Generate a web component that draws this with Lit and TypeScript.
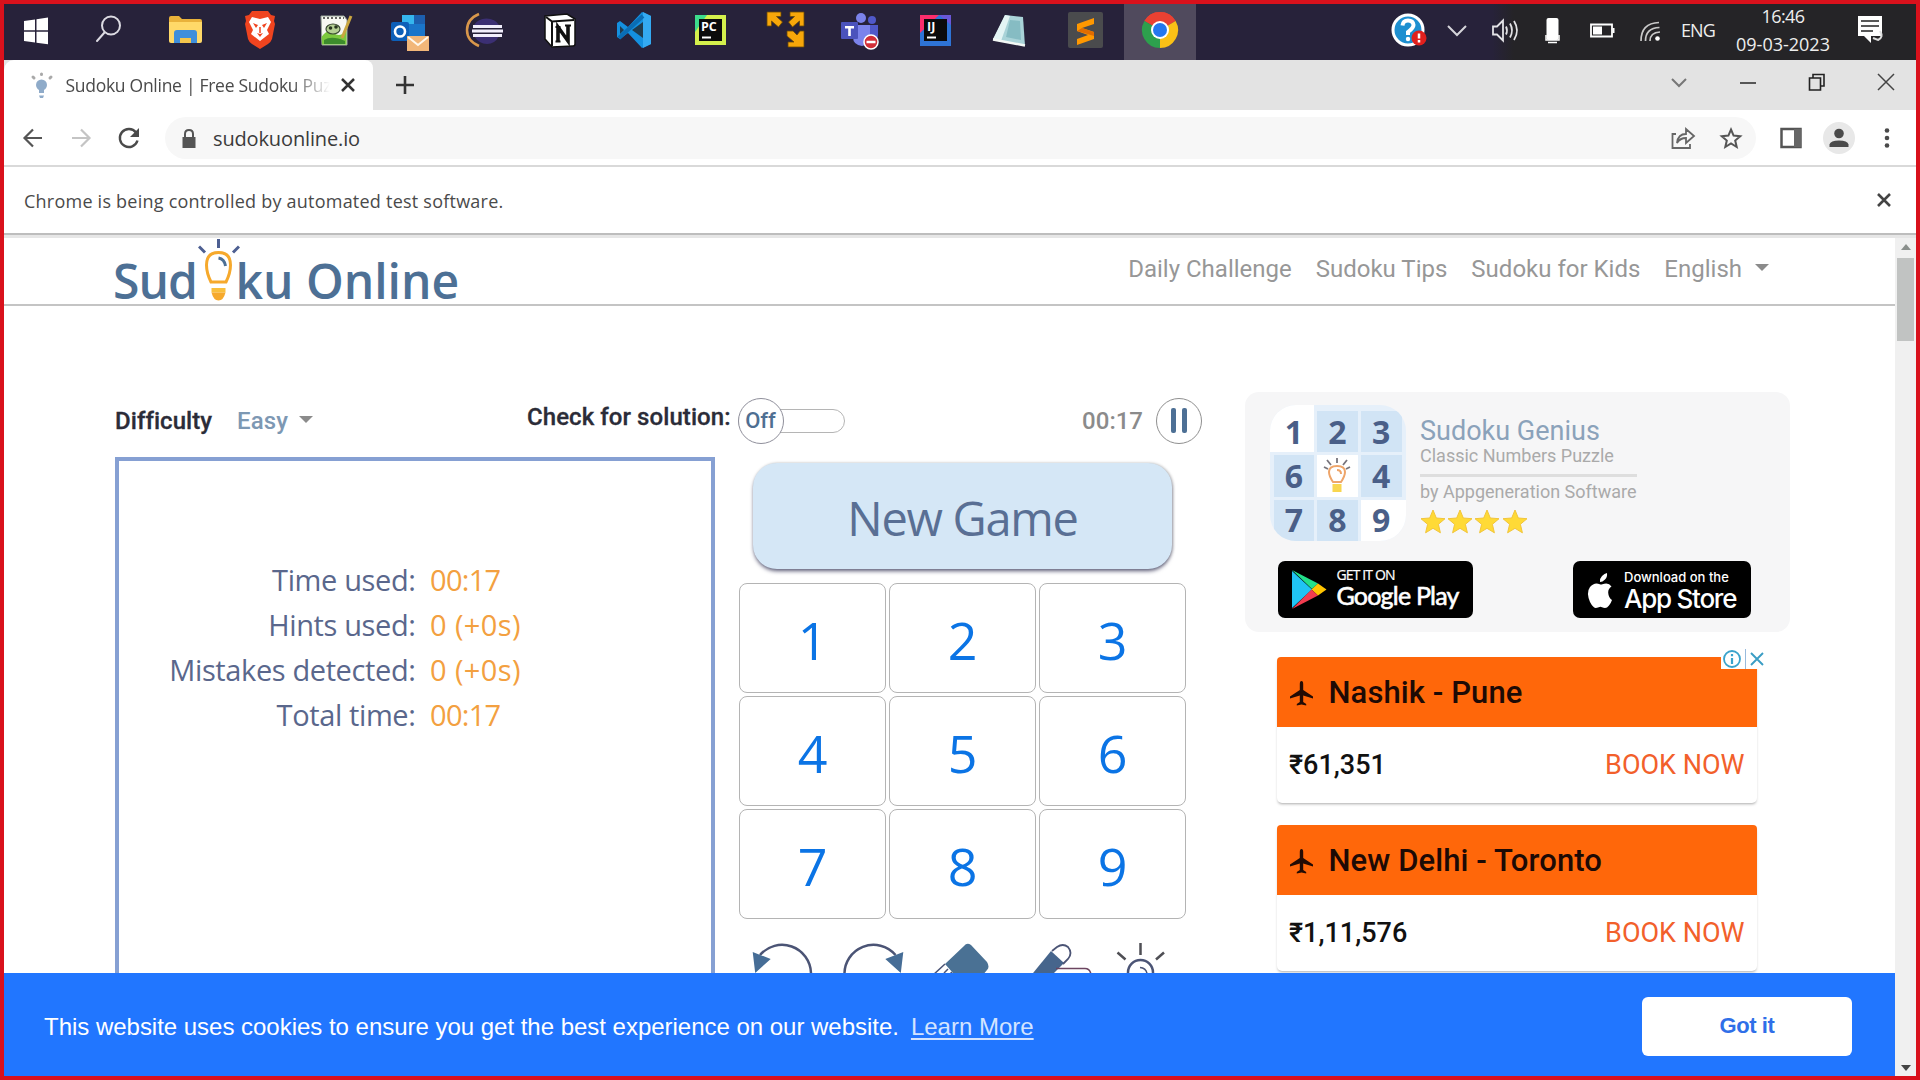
import { LitElement, html, css, svg } from "lit";
import { customElement } from "lit/decorators.js";

const icon = (body: unknown, w = 40, h = 44) =>
  html`<svg width=${w} height=${h} viewBox="0 0 ${w} ${h}" fill="none">${body}</svg>`;

const windowsLogo = svg`<path fill="#fff" d="M8 13l11-1.600v10.800H8zM20.500 11.200L32 9.500v12.700H20.500zM8 23.700h11v10.900L8 33zM20.500 23.700H32v12.600l-11.500-1.600z"/>`;
const searchGlyph = svg`<g stroke="#dcdbe2" stroke-width="2" stroke-linecap="round"><circle cx="23" cy="17.500" r="9"/><path d="M16.500 24.500L9 33"/></g>`;

const apps = [
  svg`<path fill="#e9b23a" d="M4 10q0-2 2-2h8l3 3h18q2 0 2 2v10H4z"/><path fill="#ffd968" d="M4 14h33v19q0 2-2 2H6q-2 0-2-2z"/><path fill="#3f8fdb" d="M9 25q0-3 3-3h17q3 0 3 3v10h-6v-5H15v5H9z"/><path fill="#f4c64c" d="M15 30h11v5H15z"/>`,
  svg`<path fill="#f0441f" d="M12 3h16l3 4 4 1-1 5 1 3-3 15q-1 3-4 5l-8 5-8-5q-3-2-4-5L5 16l1-3-1-5 4-1z"/><path fill="#fff" d="M12 9l8 2 8-2 3 5-4 8 2 4-9 7-9-7 2-4-4-8z"/><path fill="#f0441f" d="M13 15l5 2-2 3zM27 15l-5 2 2 3zM17 25l3 1 3-1-3 4z"/><path stroke="#f0441f" stroke-width="1.500" d="M20 19v6"/>`,
  svg`<path fill="#f7f8f2" stroke="#9aa59a" d="M6 8h23l3 4v25H7z"/><path fill="#7cc93e" d="M6.500 29q6-9 12-4t13-2v13.500H7z"/><path fill="#3d8c2c" d="M9 32q8-5 21 1v3H9z"/><ellipse cx="18" cy="21" rx="7" ry="5" fill="#b5cf94" stroke="#3a4a32" stroke-width="1.200"/><circle cx="15.500" cy="20" r="1.800" fill="#26331f"/><circle cx="21" cy="19" r="1.800" fill="#26331f"/><path stroke="#333" stroke-width="1.500" stroke-dasharray="2 2" d="M8 10h21"/><path stroke="#c9a640" stroke-width="3" d="M36 8l-9 22"/>`,
  svg`<path fill="#1a75c9" d="M12 7h23v24H12z"/><path fill="#35b6ee" d="M12 7h12v9H12z"/><path fill="#1d5fae" d="M24 7h11v9H24z"/><rect x="1" y="14" width="18" height="19" rx="2" fill="#0d5fb8"/><circle cx="10" cy="23.500" r="5" stroke="#fff" stroke-width="2.600"/><rect x="17" y="28" width="22" height="15" fill="#f2b779"/><path stroke="#fff8ec" stroke-width="2" d="M18 29l10 8 10-8"/>`,
  svg`<path stroke="#d9974b" stroke-width="2.500" d="M14 6Q2 11 2 22t12 16"/><path fill="#3b2f73" d="M9 17a14 12 0 0 1 25 0zM9 28h25q-4 8-12 8T9 28z"/><path stroke="#f1eefc" stroke-width="2.800" d="M8 18.500h29M7 23h31M8 27.500h29"/>`,
  svg`<path fill="#fff" stroke="#111" stroke-width="1.500" d="M5 8l22-2 8 5v25q0 2-2 2l-21 1-7-8z"/><path stroke="#111" stroke-width="2" d="M6 9l6 4.500 22-1.500M12 14v24"/><path stroke="#111" stroke-width="3.600" d="M18 34V19l10 14V17"/><path stroke="#111" stroke-width="2" d="M15.500 19h5M25 17.500h6M15.500 33.500h5"/>`,
  svg`<path fill="#1490df" d="M27 4l9 4v28l-9 4L13 25l-8 6-3-2V15l3-2 8 6z"/><path fill="#24201f" fill-opacity=".75" d="M28 14v16L17 22zM5 18v8l4-4z"/><path fill="#34aaf2" d="M28 4l8 4v28l-8 4z"/><path stroke="#0a6db4" stroke-width="4" d="M4 30L28 8"/>`,
  svg`<rect x="5" y="7" width="31" height="30" fill="#d4f04c"/><path fill="#3ddc8c" d="M5 7h12L5 24z"/><rect x="9" y="11" width="23" height="22" fill="#0b0b0b"/><path fill="#fff" d="M12 28.500h9v2h-9z"/><text x="11" y="22.500" class="badge">PC</text>`,
  svg`<path fill="#f7a70a" stroke="#6b4a05" stroke-width=".8" d="M2 4h14v4.500h-4.500l6 5.500-4 5-7-6v5H2zM39 4H25v4.500h4.500l-6 5.500 4 5 7-6v5H39zM22 23h6l4 4 3-4h4v16H23v-5h6l-7-6z"/>`,
  svg`<circle cx="21" cy="10" r="5" fill="#7b83eb"/><circle cx="32" cy="12" r="4" fill="#5059c9"/><path fill="#5059c9" d="M25 17h13v10q0 6-6 7h-7z"/><path fill="#7b83eb" d="M13 17h17v12q0 8-8 9-9-1-9-9z"/><rect x="1" y="14" width="17" height="17" rx="1" fill="#4b53bc"/><path fill="#fff" d="M5 18h9v2.500h-3.200V28H8.200v-7.500H5z"/><circle cx="31" cy="34" r="7" fill="#d12f38" stroke="#fff" stroke-width="1.500"/><path stroke="#fff" stroke-width="2.500" d="M26.500 34h9"/>`,
  svg`<rect x="5" y="7" width="31" height="31" fill="#2e74d6"/><path fill="#fb2d6c" d="M5 7h19L5 25z"/><path fill="#6a57d8" d="M24 7h12v10z"/><rect x="9" y="11" width="23" height="22" fill="#0b0b0b"/><path fill="#fff" d="M12 28.500h9v2h-9z"/><text x="12" y="22.500" class="badge">IJ</text>`,
  svg`<path fill="#a9d3d8" d="M15 7l18 2 2 29-32-6z"/><path fill="#e3f4f4" d="M15 7l5 1-9 25-8-2z"/><path fill="#86bcc3" d="M20 12l10 1 1 19-15-3z"/><path stroke="#f3f8f5" stroke-width="2.500" d="M3 31.500l32 6"/>`,
  svg`<rect x="3" y="4" width="35" height="36" rx="2" fill="#4a4b4d"/><path fill="#ff9800" d="M29 10v6l-12 4 12 4v7l-17 6v-6l11-4-11-4v-7z"/><path fill="#e06c00" d="M17 20l12 4v4l-17-5z"/>`,
  svg`<path fill="#e94132" d="M20 22L4.400 13A18 18 0 0 1 35.600 13z"/><path fill="#fbc116" d="M20 22l15.600-9A18 18 0 0 1 20 40z"/><path fill="#2da04d" d="M20 22v18A18 18 0 0 1 4.400 13z"/><path fill="#e94132" d="M4.400 13A18 18 0 0 1 35.600 13H20z"/><circle cx="20" cy="22" r="9" fill="#fff"/><circle cx="20" cy="22" r="7" fill="#2477ee"/>`,
];

const tray = [
  svg`<circle cx="20" cy="22" r="15" fill="#1d8fd0" stroke="#fff" stroke-width="3"/><path stroke="#fff" stroke-width="4" d="M14.500 17.500q.5-5 5.500-5t5.500 4.500q0 3-5.500 7v3"/><circle cx="20" cy="31" r="2.200" fill="#fff"/><circle cx="31" cy="30" r="7.500" fill="#e0201d"/><path stroke="#fff" stroke-width="2.500" d="M31 25.500v5M31 32v2.500"/>`,
  svg`<path stroke="#d5d5da" stroke-width="2" d="M11 18l9 9 9-9"/>`,
  svg`<path stroke="#e3e3e6" stroke-width="1.800" d="M8 18.500h4l6-6v20l-6-6H8zM21 18.500q2 4 0 8M25 15.500q4 7 0 14M29 13q6 9.500 0 19"/>`,
  svg`<rect x="13.500" y="10" width="12" height="22" rx="2" fill="#fff"/><path stroke="#fff" stroke-width="1.500" d="M13 27v5h13v-5M15 34.500h9"/>`,
  svg`<path stroke="#fff" stroke-width="1.800" d="M9 16.500h21v12H9z"/><path fill="#fff" d="M11 18.500h9v8h-9zM30.500 20h2v5h-2z"/>`,
  svg`<g stroke="#c9c9c9" stroke-width="1.700"><path d="M11 33Q11 15 29 14.500"/><path d="M15.500 33q0-13 14-13.500" /><path d="M20 33q0-8.500 10-9"/></g><circle cx="27.500" cy="30.500" r="2.300" fill="#fff"/>`,
];

@customElement("task-bar")
export class TaskBar extends LitElement {
  static styles = css`
    :host { display: flex; align-items: center; height: 52px; padding-bottom: 4px; color: #eee;
      background: linear-gradient(90deg, #27223a 0 1488px, #252427 1510px); font: 18px/28px "Open Sans", sans-serif; }
    .cell { display: grid; place-items: center; width: 75px; height: 56px; flex: none; padding-top: 2px; margin-bottom: -4px; box-sizing: border-box; }
    .cell svg { margin-bottom: 6px; }
    .start { width: 72px; }
    .first { margin-left: -4px; }
    .apps { display: flex; padding-left: 3.500px; }
    .active { background: #504a5d; width: 72px; margin-left: 1.500px; }
    .tray { display: flex; margin-left: auto; align-items: center; }
    .tray .cell { width: 48.300px; }
    .lang { width: 34px; margin-left: 7px; letter-spacing: -.88px; margin-right: 21px; }
    .clock { display: flex; flex-direction: column; align-items: center; width: 94px; font-size: 18px; }
    .time { letter-spacing: -.58px; }
    .note { margin: 0 26px 0 20px; padding-top: 4px; }
    .badge { font: 700 12.500px "Open Sans", sans-serif; fill: #fff; }
  `;
  render() {
    return html`
      <div class="cell start first">${icon(windowsLogo)}</div>
      <div class="cell start">${icon(searchGlyph)}</div>
      <div class="apps">${apps.map((a, i) => html`<div class="cell ${i === apps.length - 1 ? "active" : ""}">${icon(a)}</div>`)}</div>
      <div class="tray">
        ${tray.map((a) => html`<div class="cell">${icon(a)}</div>`)}
        <div class="lang">ENG</div>
        <div class="clock"><span class="time">16:46</span><span>09-03-2023</span></div>
        <div class="note">${icon(svg`<path fill="#fff" d="M8 9h24v20H21v7l-7-7H8z"/><path stroke="#222" stroke-width="1.700" d="M11 14h18M11 19h18M11 24h12"/><path stroke="#ddd" stroke-width="2" d="M30 24q4 6-2 9l-5-2"/>`)}</div>
      </div>`;
  }
}

@customElement("browser-chrome")
export class BrowserChrome extends LitElement {
  static styles = css`
    :host { display: block; font: 18px/24px "Open Sans", sans-serif; color: #4a4a4a; }
    svg { display: block; flex: none; }
    .strip { display: flex; height: 50px; background: #e3e3e3; align-items: center; }
    .tab { display: flex; align-items: center; width: 369px; height: 50px; background: #fff; padding: 0 11px 0 24px; box-sizing: border-box; border-radius: 10px 8px 0 0; }
    .title { width: 282px; flex: none; margin-left: 11.500px; margin-right: -15px; font-size: 17.500px; letter-spacing: -.28px; white-space: nowrap;
      -webkit-mask: linear-gradient(90deg, #000 225px, transparent 264px); mask: linear-gradient(90deg, #000 225px, transparent 264px); }
    .plus { margin-left: 18px; }
    .controls { display: flex; gap: 29px; margin-left: auto; padding-right: 10.500px; margin-bottom: 7px; }
    .toolbar { display: flex; align-items: center; height: 55px; border-bottom: 2px solid #d9d9d9; padding: 0 9px; background: #fff; }
    .nav { display: flex; gap: 8px; }
    .omni { display: flex; align-items: center; flex: 1; height: 42px; margin: 0 15px 0 16px; background: #f7f7f7; border-radius: 21px; padding: 0 4px; box-sizing: border-box; }
    .url { flex: 1; font-size: 20px; letter-spacing: -.14px; color: #3b3b3b; padding-top: 2px; }
    .lock { margin-right: 4px; }
    .tools { display: flex; gap: 8px; align-items: center; margin-right: 1px; }
    .menu { display: flex; gap: 8px; }
    .info { display: flex; align-items: center; justify-content: space-between; height: 66px; padding: 0 12px 0 20px; background: #fff;
      letter-spacing: .23px; border-bottom: 2px solid #bdbdbd; }
    .info span { padding-top: 2px; }
    .shade { height: 3px; background: #e6e6e6; }
  `;
  render() {
    return html`
      <div class="strip">
        <div class="tab">
          ${icon(svg`<circle cx="13.500" cy="15" r="5.500" fill="#8fabc9"/><path fill="#8fabc9" d="M11 19h5v4h-5zM11 25.500h5l-1 2.500h-3z"/><path stroke="#a9a9a9" stroke-width="3" stroke-linecap="round" d="M5 7l1 1M13.500 4v.5M23 7l-1 1"/>`, 26, 30)}
          <span class="title">Sudoku Online | Free Sudoku Puz</span>
          ${icon(svg`<path stroke="#333" stroke-width="2.500" d="M9 9l12 12M21 9L9 21"/>`, 30, 30)}
        </div>
        <div class="plus">${icon(svg`<path stroke="#333" stroke-width="2.600" d="M14 5v18M5 14h18"/>`, 28, 28)}</div>
        <div class="controls">
          ${icon(svg`<path stroke="#777" stroke-width="2" d="M13 17l7 7 7-7"/>`, 40, 40)}
          ${icon(svg`<path stroke="#333" stroke-width="1.600" d="M12 21h16"/>`, 40, 40)}
          ${icon(svg`<path stroke="#222" stroke-width="1.600" d="M12.500 16h11v12h-11zM16 16v-3.500h11V24h-3.500"/>`, 40, 40)}
          ${icon(svg`<path stroke="#444" stroke-width="1.500" d="M12 12l16 16M28 12L12 28"/>`, 40, 40)}
        </div>
      </div>
      <div class="toolbar">
        <div class="nav">
          ${icon(svg`<path stroke="#555" stroke-width="2.200" d="M29 20H12M20 11.500L11.500 20l8.500 8.500"/>`, 40, 40)}
          ${icon(svg`<path stroke="#c4c4c4" stroke-width="2.200" d="M11 20h17M20 11.500l8.500 8.500-8.500 8.500"/>`, 40, 40)}
          ${icon(svg`<path stroke="#4a4a4a" stroke-width="2.400" d="M28.500 22.500a9 9 0 1 1-1.500-8"/><path fill="#4a4a4a" d="M30 10v9h-9z"/>`, 40, 40)}
        </div>
        <div class="omni">
          <div class="lock">${icon(svg`<path fill="#555" d="M13.500 19h13v11h-13z"/><path stroke="#555" stroke-width="2" d="M16 20v-4q0-4 4-4t4 4v4"/>`, 40, 40)}</div>
          <span class="url">sudokuonline.io</span>
          <div class="tools">
            ${icon(svg`<path stroke="#666" stroke-width="1.800" d="M13 16H9.500v14H27v-4M14 25q1-9 9-9v-5l8 7-8 7v-5q-6 0-9 5z"/>`, 40, 40)}
            ${icon(svg`<path stroke="#555" stroke-width="2" d="M20 11.500l2.600 6.100 6.600.6-5 4.300 1.500 6.500-5.700-3.500-5.700 3.500 1.500-6.500-5-4.300 6.600-.6z"/>`, 40, 40)}
          </div>
        </div>
        <div class="menu">
          ${icon(svg`<path stroke="#555" stroke-width="2.500" d="M10.500 11h19v18h-19z"/><path fill="#666" d="M23 11h7v18h-7z"/>`, 40, 40)}
          ${icon(svg`<circle cx="20" cy="20" r="16" fill="#e8e8e8"/><circle cx="20" cy="15.500" r="4.800" fill="#4a4a4a"/><path fill="#4a4a4a" d="M10.500 29v-2.500q1-4 9.500-4t9.500 4V29z"/>`, 40, 40)}
          ${icon(svg`<g fill="#4a4a4a"><circle cx="20" cy="12.500" r="2.300"/><circle cx="20" cy="20" r="2.300"/><circle cx="20" cy="27.500" r="2.300"/></g>`, 40, 40)}
        </div>
      </div>
      <div class="info">
        <span>Chrome is being controlled by automated test software.</span>
        ${icon(svg`<path stroke="#444" stroke-width="2.600" d="M14 14l12 12M26 14L14 26"/>`, 40, 40)}
      </div>
      <div class="shade"></div>`;
  }
}

@customElement("site-header")
export class SiteHeader extends LitElement {
  static styles = css`
    :host { display: flex; height: 66px; border-bottom: 2px solid #c4c4c4; padding: 0 126px 0 109px; justify-content: space-between; background: #fff; }
    .logo { display: flex; font: 600 48px/86px "Open Sans", sans-serif; color: #4d7095; height: 66px; }
    .sud { width: 85px; letter-spacing: -.9px; }
    .rest { letter-spacing: 0; margin-left: -4.500px; white-space: nowrap; }
    .logo svg { display: block; }
    nav { display: flex; gap: 24px; font: 24px/62px Roboto, sans-serif; color: #979797; }
    .lang { display: flex; align-items: center; height: 62px; gap: 13px; }
    .caret { border: 7px solid transparent; border-top-color: #8b8b8b; border-bottom: 0; margin-top: -3px; }
  `;
  render() {
    return html`
      <div class="logo">
        <span class="sud">Sud</span>
        <svg width="42" height="66" viewBox="198 238 42 66" fill="none">
          <g stroke="#4d5f92" stroke-width="3"><path d="M218.500 239v9M199 246.500l6 6M239 246.500l-6 6"/></g>
          <path stroke="#f6a92c" stroke-width="3" d="M211 282q-4.500-9-4.500-17 0-12.500 12-12.500t12 12.500q0 8-4.500 17z"/>
          <path stroke="#4d7095" stroke-width="3" d="M218.500 258q6 1 7 8"/>
          <path fill="#f9bf3c" d="M211.500 288h14v4.500h-14z"/><path fill="#f6a92c" d="M211.500 292.500h14q-2 8-7 8t-7-8z"/>
        </svg>
        <span class="rest">ku Online</span>
      </div>
      <nav>
        <span>Daily Challenge</span><span>Sudoku Tips</span><span>Sudoku for Kids</span>
        <span class="lang">English <i class="caret"></i></span>
      </nav>`;
  }
}

const stats: [string, string, string][] = [
  ["Time used:", "00:17", "t"],
  ["Hints used:", "0 (+0s)", "s"],
  ["Mistakes detected:", "0 (+0s)", "s"],
  ["Total time:", "00:17", "t"],
];

@customElement("sudoku-game")
export class SudokuGame extends LitElement {
  static styles = css`
    :host { display: block; width: 1088px; padding-top: 91px; font: 24px/28px Roboto, sans-serif; flex: none; }
    .controls { display: flex; align-items: center; height: 47px; font-weight: 500; padding-right: 1px; }
    .level { display: flex; align-items: center; width: 412px; color: #2b2c38; }
    .level b { width: 122px; font-weight: 500; letter-spacing: .05px; -webkit-text-stroke: .3px; }
    .easy { color: #7d98b3; margin-right: 11px; letter-spacing: .1px; }
    .caret { border: 7px solid transparent; border-top-color: #8b8b8b; border-bottom: 0; margin-top: -2px; }
    .check { width: 210.500px; color: #2b2c38; letter-spacing: .07px; margin-top: -8px; white-space: nowrap; -webkit-text-stroke: .3px; }
    .toggle { width: 107px; height: 24px; border: 1.500px solid #b5b5b5; border-radius: 12px; box-sizing: border-box; display: flex; align-items: center; }
    .knob { width: 46px; height: 46px; border: 1.500px solid #8f8f9b; border-radius: 50%; box-sizing: border-box; background: #fff; display: grid; place-items: center;
      margin-left: -1px; color: #4f6f92; flex: none; font-size: 22px; }
    .timer { margin-left: auto; color: #8b8b8b; margin-right: 13px; }
    .pause { width: 46px; height: 46px; border: 1.500px solid #8f8f8f; border-radius: 50%; box-sizing: border-box; display: flex; gap: 6px; align-items: center; justify-content: center; }
    .pause i { width: 5px; height: 25px; background: #4d7095; border-radius: 2px; }
    .play { display: flex; gap: 24px; margin-top: 13px; }
    .board { width: 600px; height: 600px; box-sizing: border-box; border: 4px solid #86a0d3; padding-top: 96px; font: 29px/45px "Open Sans", sans-serif; }
    .row { display: flex; }
    .label { width: 296.500px; margin-right: 14.500px; text-align: right; letter-spacing: -.38px; color: #5a678c; }
    .value { color: #f3a040; letter-spacing: .4px; }
    .value.t { letter-spacing: -.7px; }
    .new { margin: 6px 14px 14px 14px; height: 106px; border-radius: 24px; background: #d5e7f6; box-shadow: 0 3px 4px -1px #5d5d78, 1px 0 3px #bbb; display: grid; place-items: center;
      font: 47px/60px "Open Sans", sans-serif; letter-spacing: -1.280px; color: #596f94; padding-top: 3px; box-sizing: border-box; }
    .keys { display: grid; grid-template-columns: repeat(3, 147px); gap: 3px; }
    .key { height: 110px; border: 1.500px solid #b4b4b4; border-radius: 8px; box-sizing: border-box; display: grid; place-items: center; color: #0b74e5; font: 52px/80px "Open Sans", sans-serif; padding-top: 3px; }
    .tools { display: block; margin-top: 20px; }
  `;
  render() {
    return html`
      <div class="controls">
        <div class="level"><b>Difficulty</b><span class="easy">Easy</span><i class="caret"></i></div>
        <span class="check">Check for solution:</span>
        <div class="toggle"><span class="knob">Off</span></div>
        <span class="timer">00:17</span>
        <div class="pause"><i></i><i></i></div>
      </div>
      <div class="play">
        <div class="board">
          ${stats.map(([l, v, c]) => html`<div class="row"><span class="label">${l}</span><span class="value ${c}">${v}</span></div>`)}
        </div>
        <div>
          <div class="new">New Game</div>
          <div class="keys">${[1, 2, 3, 4, 5, 6, 7, 8, 9].map((n) => html`<div class="key">${n}</div>`)}</div>
          <svg class="tools" width="447" height="60" viewBox="739 939 447 60" fill="none">
            <g stroke="#4b5475" stroke-width="2.500"><path d="M760 955a29 29 0 0 1 51 18M844.500 975a29 29 0 0 1 51-20"/></g>
            <path fill="#466d96" d="M752.700 952l18 7-15.500 14zM903.300 952l-18 7 15.500 14z"/>
            <path fill="#4a7194" d="M945 964l19-18q3-4 7-1l16 17q3 5 0 8l-10 12h-16z"/>
            <path stroke="#4b5475" stroke-width="1.500" d="M945 964l-13 12M948 969l-4 4M952 972l-3 3"/>
            <path fill="#46658c" d="M1051 951l13 12-15 15h-20z"/>
            <path stroke="#4b5475" stroke-width="1.800" d="M1052 951l5-4q6-4 11 0 5 6 0 12l-5 5"/>
            <path stroke="#6c4560" stroke-width="1.500" d="M1056 968.500h29q5 0 6 6"/>
            <g stroke="#4f4f55" stroke-width="2.500"><path d="M1140.500 943v12M1117.500 952.500l8 7M1164 952.500l-8 7"/></g>
            <circle cx="1140.500" cy="972.500" r="12.500" stroke="#4b5475" stroke-width="2.500"/>
            <path stroke="#4b5475" stroke-width="1.500" d="M1140 967.500q6 .5 7 6"/>
          </svg>
        </div>
      </div>`;
  }
}

const offers = [
  { route: "Nashik - Pune", price: "₹61,351" },
  { route: "New Delhi - Toronto", price: "₹1,11,576" },
];
const star = svg`<path fill="#ffda36" stroke="#f2c53b" d="M13 1l3.300 8 8.700.7-6.600 5.600 2 8.500L13 19.300l-7.400 4.500 2-8.500L1 9.700 9.700 9z"/>`;

@customElement("side-panel")
export class SidePanel extends LitElement {
  static styles = css`
    :host { display: block; width: 545px; padding: 86px 0 0 41.500px; font: 24px/28px Roboto, sans-serif; flex: none; box-sizing: content-box; }
    svg { display: block; flex: none; }
    .card { height: 240px; box-sizing: border-box; padding: 13px 25px; background: #f6f6f7; border-radius: 14px; }
    .top { display: flex; gap: 14.500px; }
    .tile { width: 136px; height: 136px; box-sizing: border-box; padding: 6px 4px 0; display: grid; grid-template: repeat(3, 1fr) / repeat(3, 1fr); gap: 3px; background: #e6f0fa; border-radius: 26px; overflow: hidden;
      font: 700 32px/40px "Noto Sans", sans-serif; color: #4a5f88; }
    .n { display: grid; place-items: center; background: #d1e4f5; }
    .n.w { background: #fff; }
    .n:first-child { margin: -6px 0 0 -4px; padding: 6px 0 0 4px; }
    .n:last-child { margin-right: -4px; padding-right: 4px; }
    .text { padding-top: 10px; width: 217px; color: #aaa; font-size: 18px; white-space: nowrap; }
    .name { font-size: 27px; line-height: 32px; color: #8ba2ba; }
    .sub { line-height: 18px; }
    .rule { height: 3px; background: #dedede; margin: 9px 0 5px; }
    .by { line-height: 20px; }
    .stars { display: flex; gap: 1.200px; margin-top: 7px; }
    .badges { display: flex; gap: 100px; padding: 20px 0 0 8px; }
    .store { display: flex; height: 57px; background: #000; color: #fff; border-radius: 7px; box-sizing: border-box; white-space: nowrap; }
    .google { width: 195px; font: 25px/26px Lato, sans-serif; letter-spacing: -.78px; padding: 5px 0 0 10px; gap: 9px; -webkit-text-stroke: .6px #fff; }
    .google small { display: block; font: 14px/18px "Open Sans", sans-serif; letter-spacing: -.88px; -webkit-text-stroke: .2px #fff; margin-bottom: -2px; }
    .apple { width: 178px; font: 500 26px/27px Inter, sans-serif; letter-spacing: -1.250px; padding: 6px 0 0 10.500px; gap: 8px; }
    .apple small { display: block; font-size: 13px; line-height: 20px; letter-spacing: 0; margin-bottom: -2px; }
    .ads { display: flex; flex-direction: column; gap: 22px; width: 480px; margin: 25px 0 0 32px; position: relative; }
    .offer { height: 146px; border-radius: 5px; box-shadow: 0 2px 3px -1px #aaa; }
    .route { display: flex; align-items: center; gap: 15px; height: 70px; padding: 1px 0 0 12px; box-sizing: border-box; background: #ff670a; color: #1d0a05; font: 500 31px/40px Roboto, sans-serif; letter-spacing: .09px; border-radius: 4px 4px 0 0; }
    .buy { display: flex; justify-content: space-between; align-items: center; height: 76px; padding: 0 12px 0 12.500px; box-sizing: border-box; font-size: 27px; }
    .price { font-weight: 500; color: #111; }
    .book { color: #f2602b; }
    .choices { position: absolute; right: -11px; top: -8px; display: flex; gap: 3px; background: #fff; height: 20px; width: 47px; }
    .choices svg + svg { border-left: 1px solid #9bd; }
  `;
  render() {
    return html`
      <div class="card">
        <div class="top">
          <div class="tile">
            ${[1, 2, 3, 6, 0, 4, 7, 8, 9].map((n) => html`<div class="n ${[1, 0, 9].includes(n) ? "w" : ""}">${n || html`<svg width="30" height="40" viewBox="0 0 30 40" fill="none"><path stroke="#77747c" stroke-width="1.800" d="M15 2v5M5 4l4 5M25 4l-4 5M2 11l4 2M28 11l-4 2"/><path stroke="#eea56a" stroke-width="2" d="M11 26q-4-6-4-10 0-6 8-6t8 6q0 4-4 10zM15 14q4 0 4 4"/><path fill="#f8d64f" d="M10.500 28h9v8h-9z"/></svg>`}</div>`)}
          </div>
          <div class="text">
            <div class="name">Sudoku Genius</div>
            <div class="sub">Classic Numbers Puzzle</div>
            <div class="rule"></div>
            <div class="by">by Appgeneration Software</div>
            <div class="stars">${[0, 1, 2, 3].map(() => icon(star, 26, 25))}</div>
          </div>
        </div>
        <div class="badges">
          <div class="store google">
            ${icon(svg`<path fill="#20c4f4" d="M4 5v37l20-18.500z"/><path fill="#22e08a" d="M4 4l20 19 6-5.500z"/><path fill="#ffc400" d="M30 17.500l8.500 6L30 29.500l-6.500-6z"/><path fill="#f23c4f" d="M4 43l26-13.500-6.500-6z"/>`, 40, 47)}
            <div><small>GET IT ON</small>Google Play</div>
          </div>
          <div class="store apple">
            ${icon(svg`<path fill="#fff" d="M24 6q.5 4-2 6.500T17 15q-.5-3.500 2-6t5-3zM29 33q-1 3-3 5.500-2 2.500-4 2.500-1.500 0-3-.8t-3.200 0Q14 41 12.500 41q-2.500-.3-5.500-6-4-9.500 0-15 3-3.500 6.500-3.500 1.500 0 3.300.8 1.200.5 2.600-.1 2-.8 3.800-.8 3.300.2 5.300 3-3.500 2.200-3.300 6.300.3 5 3.800 7.300z"/>`, 33, 44)}
            <div><small>Download on the</small>App Store</div>
          </div>
        </div>
      </div>
      <div class="ads">
        ${offers.map((o) => html`<div class="offer">
          <div class="route">${icon(svg`<path fill="#230b04" d="M12.500 3q1.700 0 1.700 3v6l9.800 6.500v2l-9.800-3V24l3 2v1.600l-4.700-1.200-4.700 1.200V26l3-2v-6.500l-9.800 3v-2L10.800 12V6q0-3 1.700-3z"/>`, 25, 29)}<span>${o.route}</span></div>
          <div class="buy"><span class="price">${o.price}</span><span class="book">BOOK NOW</span></div>
        </div>`)}
        <div class="choices">
          ${icon(svg`<circle cx="11" cy="10" r="8" stroke="#3aa3cc" stroke-width="1.800"/><path stroke="#3aa3cc" stroke-width="2.200" d="M11 9v6M11 5v2.200"/>`, 21, 20)}
          ${icon(svg`<path stroke="#3a9dc4" stroke-width="1.900" d="M5 4l12 12M17 4L5 16"/>`, 22, 20)}
        </div>
      </div>`;
  }
}

@customElement("cookie-banner")
export class CookieBanner extends LitElement {
  static styles = css`
    :host { display: flex; align-items: center; height: 103px; flex: none; background: #2176ff; color: #fff; padding: 0 43px 0 40px; font: 24px/30px "Liberation Sans", Arial, sans-serif; }
    .msg { letter-spacing: -.02px; margin-right: 12px; padding-top: 5px; white-space: nowrap; }
    .more { color: #d3e4ff; text-decoration: underline; text-underline-offset: 3px; text-decoration-thickness: 2px; padding-top: 4px; flex: 1; }
    .ok { width: 210px; height: 59px; border-radius: 6px; background: #fff; color: #2f6fe8; display: grid; place-items: center; font-weight: 700; font-size: 22px; letter-spacing: -.4px; margin-top: 4px; padding-bottom: 1px; box-sizing: border-box; }
  `;
  render() {
    return html`<span class="msg">This website uses cookies to ensure you get the best experience on our website.</span>
      <span class="more">Learn More</span><span class="ok">Got it</span>`;
  }
}

@customElement("app-root")
export class AppRoot extends LitElement {
  static styles = css`
    :host { display: flex; flex-direction: column; width: 1920px; height: 1080px; box-sizing: border-box; border: 4px solid #d9111c; background: #fff; overflow: hidden; }
    .page { display: flex; flex: 1; min-height: 0; }
    .view { display: flex; flex-direction: column; width: 1891px; min-height: 0; }
    .main { display: flex; flex: 1; min-height: 0; overflow: hidden; padding-left: 111px; }
    .bar { flex: 1; background: #f0f0f0; display: flex; flex-direction: column; align-items: center; padding: 6px 0 5px; box-sizing: border-box; }
    .up, .down { border: 5px solid transparent; border-top: 0; border-bottom: 6px solid #8a8f8c; }
    .down { border-bottom: 0; border-top: 6px solid #444; margin-top: auto; }
    .thumb { width: 17px; height: 83px; background: #c1c3c2; margin-top: 8px; }
  `;
  render() {
    return html`
      <task-bar></task-bar>
      <browser-chrome></browser-chrome>
      <div class="page">
        <div class="view">
          <site-header></site-header>
          <div class="main"><sudoku-game></sudoku-game><side-panel></side-panel></div>
          <cookie-banner></cookie-banner>
        </div>
        <div class="bar"><i class="up"></i><div class="thumb"></div><i class="down"></i></div>
      </div>`;
  }
}
